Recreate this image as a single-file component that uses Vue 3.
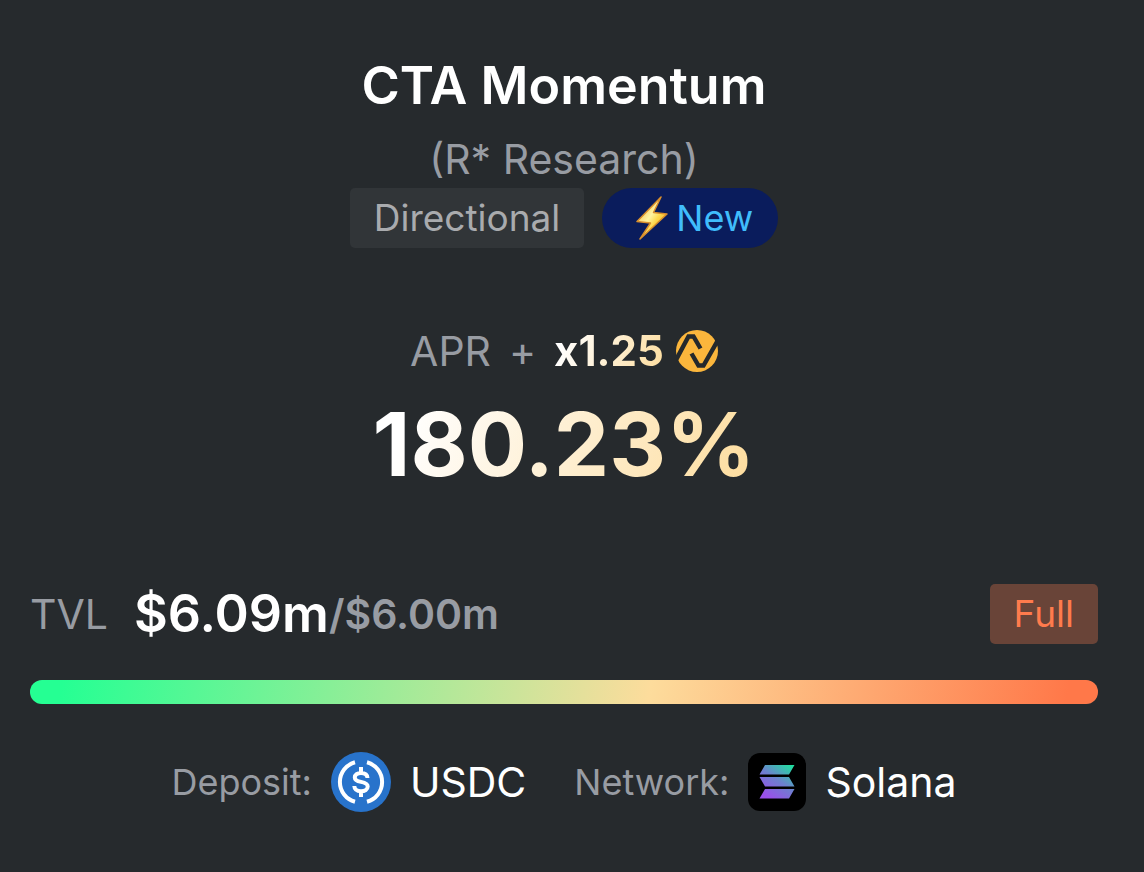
<script setup>
const vault = {
  name: 'CTA Momentum',
  manager: '(R* Research)',
  strategy: 'Directional',
  boost: 'x1.25',
  apr: '180.23%',
  tvl: '$6.09m',
  cap: '$6.00m',
  status: 'Full',
  filled: 100,
  token: 'USDC',
  network: 'Solana',
}
</script>

<template>
  <article class="card">
    <header class="head">
      <h1 class="title">{{ vault.name }}</h1>
      <p class="manager">{{ vault.manager }}</p>
      <div class="tags">
        <span class="tag">{{ vault.strategy }}</span>
        <span class="tag tag-new">
          <svg class="bolt" viewBox="0 0 32 44" aria-hidden="true">
            <defs>
              <linearGradient id="boltFill" x1="0" y1="0" x2="1" y2="1">
                <stop offset="0" stop-color="#f5a623" />
                <stop offset="0.45" stop-color="#fff3a0" />
                <stop offset="0.6" stop-color="#ffd84a" />
                <stop offset="1" stop-color="#e8860c" />
              </linearGradient>
            </defs>
            <path d="M25 1 1 25.500l13.500 1.500L4 43 31 18l-13.500-1.500z" fill="url(#boltFill)" stroke="#d98f2c" stroke-width="1.500" stroke-linejoin="round" />
          </svg>
          <span>New</span>
        </span>
      </div>
    </header>

    <section class="yield">
      <div class="apr-label">
        <span>APR</span>
        <span>+</span>
        <span class="reward">
          <strong class="boost">{{ vault.boost }}</strong>
          <svg class="points" viewBox="0 0 42 42" aria-hidden="true">
            <circle cx="21" cy="21" r="21" fill="#fbb63c" />
            <path d="M0 30 12.500 6.500h5L24.500 18.500M15.500 23.500l7 12h5L42 10" fill="none" stroke="#25292c" stroke-width="4.400" />
          </svg>
        </span>
      </div>
      <div class="apr">{{ vault.apr }}</div>
    </section>

    <section class="capacity">
      <div class="tvl-row">
        <span class="label">TVL</span>
        <strong class="tvl">{{ vault.tvl }}</strong>
        <span class="slash">/</span>
        <b class="cap">{{ vault.cap }}</b>
        <span class="tag tag-full">{{ vault.status }}</span>
      </div>
      <div class="track" role="progressbar" aria-label="TVL" aria-valuemin="0" aria-valuemax="100" :aria-valuenow="vault.filled">
        <div class="fill" :style="{ width: vault.filled + '%' }"></div>
      </div>
    </section>

    <footer class="assets">
      <div class="asset">
        <span class="asset-label">Deposit:</span>
        <svg class="usdc" viewBox="0 0 60 60" aria-hidden="true">
          <circle cx="30" cy="30" r="30" fill="#2873cb" />
          <g fill="none" stroke="#fff" stroke-width="4">
            <path d="M24 10.300a20.400 20.400 0 0 0 0 39.400M36 10.300a20.400 20.400 0 0 1 0 39.400" />
            <path d="M36.500 26c-.2-3.200-2.800-5-6.500-5s-6.200 1.700-6.200 4.500 2.500 3.700 6.200 4.400 6.700 1.600 6.700 4.600-2.900 4.700-6.700 4.700-6.500-1.800-6.700-5.200M30 15v6M30 39v6" />
          </g>
        </svg>
        <span class="asset-name">{{ vault.token }}</span>
      </div>
      <div class="asset">
        <span class="asset-label">Network:</span>
        <svg class="solana" viewBox="0 0 58 58" aria-hidden="true">
          <defs>
            <linearGradient id="solanaFill" gradientUnits="userSpaceOnUse" x1="42" y1="12" x2="20" y2="44">
              <stop offset="0" stop-color="#22dca0" />
              <stop offset="0.5" stop-color="#6d80cf" />
              <stop offset="1" stop-color="#9a50ea" />
            </linearGradient>
          </defs>
          <rect width="58" height="58" rx="12" fill="#000" />
          <path d="M17 12H46.500l-5.500 9.500H11.500zM11.500 24H41l5.500 9.500H17zM17 36H46.500l-5.500 9.500H11.500z" fill="url(#solanaFill)" />
        </svg>
        <span class="asset-name">{{ vault.network }}</span>
      </div>
    </footer>
  </article>
</template>

<style>
body {
  margin: 0;
  background: #262a2d;
}
</style>

<style scoped>
.card {
  box-sizing: border-box;
  min-height: 100vh;
  padding: 52px 46px 60px 30px;
  background: #262a2d;
  color: #fff;
  font-family: Inter, "Liberation Sans", sans-serif;
}
.head {
  display: flex;
  flex-direction: column;
  align-items: center;
}
.title {
  margin: 0;
  font-size: 52px;
  line-height: 68px;
  font-weight: 600;
}
.manager {
  margin: 10px 0 0;
  font-size: 41px;
  line-height: 58px;
  color: #989ca3;
}
.tags {
  display: flex;
  gap: 18px;
}
.tag {
  display: flex;
  align-items: center;
  padding: 0 24px;
  border-radius: 5px;
  background: #313538;
  color: #a9abae;
  font-size: 37px;
  line-height: 60px;
}
.tag-new {
  gap: 8px;
  padding: 0 25px 0 34px;
  border-radius: 30px;
  background: #0a1c5c;
  color: #40bdfb;
  font-size: 36px;
}
.bolt {
  width: 32px;
  height: 44px;
}
.yield {
  display: flex;
  flex-direction: column;
  align-items: center;
  margin-top: 76px;
}
.apr-label {
  display: flex;
  align-items: center;
  gap: 18px;
  font-size: 41px;
  line-height: 54px;
  color: #989ca3;
}
.reward {
  display: flex;
  align-items: center;
  gap: 12px;
}
.boost,
.apr {
  font-weight: 700;
  color: transparent;
  background: linear-gradient(110deg, #fff 10%, #fddc9c 100%);
  background-clip: text;
}
.boost {
  font-size: 42px;
}
.points {
  width: 42px;
  height: 42px;
}
.apr {
  margin-top: 13px;
  font-size: 88px;
  line-height: 106px;
}
.capacity {
  margin-top: 87px;
}
.tvl-row {
  display: flex;
  align-items: center;
}
.label {
  font-size: 41px;
  line-height: 60px;
  color: #989ca3;
}
.tvl {
  margin-left: 26px;
  font-size: 52px;
  line-height: 60px;
  font-weight: 600;
}
.slash,
.cap {
  font-size: 41px;
  font-weight: 600;
  line-height: 60px;
  color: #989ca3;
}
.tag-full {
  margin-left: auto;
  background: #694438;
  color: #ff7b4d;
}
.track {
  height: 24px;
  margin-top: 36px;
  border-radius: 12px;
  background: #393d40;
}
.fill {
  height: 100%;
  border-radius: 12px;
  background: linear-gradient(100deg, #25ff93 3%, #fddc9c 58%, #ff7849 97%);
}
.assets {
  display: flex;
  justify-content: center;
  gap: 48px;
  margin-top: 48px;
}
.asset {
  display: flex;
  align-items: center;
  gap: 19px;
}
.asset-label {
  font-size: 36px;
  color: #989ca3;
}
.asset-name {
  font-size: 41px;
  line-height: 60px;
}
.usdc {
  width: 60px;
  height: 60px;
}
.solana {
  width: 58px;
  height: 58px;
}
</style>
